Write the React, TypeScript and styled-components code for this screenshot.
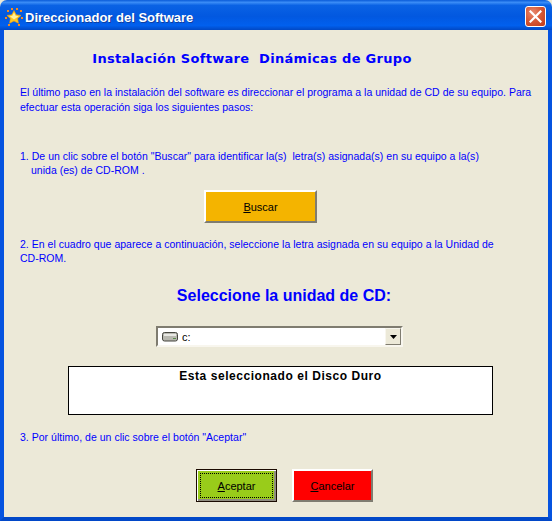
import React from "react";
import styled, { createGlobalStyle } from "styled-components";

const GlobalStyle = createGlobalStyle`
  html, body {
    margin: 0;
    padding: 0;
    background: #ece9d8;
  }
`;

const App = () => {
  return (
    <>
      <GlobalStyle />
      <Window>
        <TitleBar>
          <StarIcon />
          <TitleText>Direccionador del Software</TitleText>
          <CloseButton aria-label="Cerrar">
            <svg width="13" height="13" viewBox="0 0 13 13">
              <path d="M1.5 1.5 L11.5 11.5 M11.5 1.5 L1.5 11.5" stroke="#fff" strokeWidth="2.2" strokeLinecap="square" />
            </svg>
          </CloseButton>
        </TitleBar>
        <Body>
          <Heading>Instalación Software&nbsp; Dinámicas de Grupo</Heading>
          <Intro>
            El último paso en la instalación del software es direccionar el programa a la unidad de CD de su equipo. Para
            <br />
            efectuar esta operación siga los siguientes pasos:
          </Intro>
          <Step $top={34}>
            1. De un clic sobre el botón "Buscar" para identificar la(s)&nbsp; letra(s) asignada(s) en su equipo a la(s)
            <Indented>unida (es) de CD-ROM .</Indented>
          </Step>
          <Row $top={13} $left={184}>
            <ActionButton $bg="#f4b400" $width={113}>
              <u>B</u>uscar
            </ActionButton>
          </Row>
          <Step $top={14}>
            2. En el cuadro que aparece a continuación, seleccione la letra asignada en su equipo a la Unidad de
            <br />
            CD-ROM.
          </Step>
          <SelectLabel>Seleccione la unidad de CD:</SelectLabel>
          <Row $top={20} $left={136}>
            <Combo>
              <DriveIcon />
              <ComboValue>c:</ComboValue>
              <ComboArrow>
                <svg width="7" height="4" viewBox="0 0 7 4">
                  <path d="M0 0 H7 L3.5 4 Z" fill="#000" />
                </svg>
              </ComboArrow>
            </Combo>
          </Row>
          <StatusBox>Esta seleccionado el Disco Duro</StatusBox>
          <Step $top={15}>3. Por último, de un clic sobre el botón "Aceptar"</Step>
          <ButtonRow>
            <DefaultFrame>
              <ActionInner>
                <u>A</u>ceptar
              </ActionInner>
            </DefaultFrame>
            <ActionButton $bg="#ff0000" $width={81}>
              <u>C</u>ancelar
            </ActionButton>
          </ButtonRow>
        </Body>
      </Window>
    </>
  );
};

export default App;

const StarIcon = () => (
  <svg width="18" height="18" viewBox="0 0 18 18" style={{ flexShrink: 0 }}>
    <path d="M9 2.5 L11.2 6.8 L16 7.4 L12.6 10.6 L13.4 15.2 L9 13 L4.6 15.2 L5.4 10.6 L2 7.4 L6.8 6.8 Z" fill="#ffc81e" stroke="#f59a14" strokeWidth="0.6" />
    <path d="M9 4.5 L10.6 7.8 L13.6 8.2 L9 11.5 L4.8 8.2 L7.4 7.8 Z" fill="#fff0a0" />
    <g fill="#f58a1f">
      <rect x="2" y="2" width="2" height="2" />
      <rect x="6" y="0" width="2" height="2" />
      <rect x="11" y="0" width="2" height="2" />
      <rect x="15" y="2" width="2" height="2" />
      <rect x="0" y="9" width="2" height="2" />
      <rect x="16" y="9" width="2" height="2" />
      <rect x="3" y="16" width="2" height="2" />
      <rect x="13" y="16" width="2" height="2" />
    </g>
  </svg>
);

const DriveIcon = () => (
  <svg width="16" height="10" viewBox="0 0 16 10" style={{ flexShrink: 0 }}>
    <rect x="0.5" y="0.5" width="15" height="8.5" rx="2" fill="#b8b8b0" stroke="#45453f" />
    <rect x="2" y="2" width="12" height="2" fill="#e8e8e4" />
    <rect x="11" y="6" width="3" height="1" fill="#5a8a4a" />
  </svg>
);

const Window = styled.div`
  width: 552px;
  height: 521px;
  box-sizing: border-box;
  display: flex;
  flex-direction: column;
  overflow: hidden;
  background: #ece9d8;
  border-radius: 7px 7px 0 0;
`;

const TitleBar = styled.div`
  height: 30px;
  flex-shrink: 0;
  box-sizing: border-box;
  display: flex;
  align-items: center;
  padding: 4px 6px 0 5px;
  background: linear-gradient(
    180deg,
    #0a5bd8 0%,
    #3a8cf6 8%,
    #0a62e4 18%,
    #0258e0 55%,
    #0160ee 85%,
    #0148c4 100%
  );
`;

const TitleText = styled.span`
  margin-left: 2px;
  font-family: "Liberation Sans", Arial, sans-serif;
  font-size: 13px;
  font-weight: 700;
  color: #fff;
  text-shadow: 1px 1px 0 #0f3fa0;
`;

const CloseButton = styled.div`
  margin-left: auto;
  margin-top: -1px;
  width: 21px;
  height: 21px;
  box-sizing: border-box;
  display: flex;
  align-items: center;
  justify-content: center;
  border: 1px solid #fff;
  border-radius: 3px;
  background: radial-gradient(circle at 35% 30%, #e88a70 0%, #d85a38 45%, #c03a18 100%);
`;

const Body = styled.div`
  flex: 1;
  box-sizing: border-box;
  border-left: 4px solid #0553e0;
  border-right: 4px solid #0553e0;
  border-bottom: 4px solid #0148c8;
  padding: 0 16px;
  display: flex;
  flex-direction: column;
  font-family: "Liberation Sans", Arial, sans-serif;
`;

const Heading = styled.h1`
  margin: 21px 0 0;
  padding-right: 48px;
  text-align: center;
  font-family: "DejaVu Sans", sans-serif;
  font-size: 13px;
  line-height: 16px;
  font-weight: 700;
  letter-spacing: 0.3px;
  color: #0000ff;
`;

const Intro = styled.p`
  margin: 18px 0 0;
  font-size: 10.5px;
  line-height: 15px;
  letter-spacing: 0.02px;
  white-space: nowrap;
  color: #0000ff;
`;

const Step = styled.p<{ $top: number }>`
  margin: ${(p) => p.$top}px 0 0;
  font-size: 10.5px;
  line-height: 14px;
  letter-spacing: 0.02px;
  white-space: nowrap;
  color: #0000ff;
`;

const Indented = styled.span`
  display: block;
  padding-left: 11px;
`;

const Row = styled.div<{ $top: number; $left: number }>`
  margin-top: ${(p) => p.$top}px;
  padding-left: ${(p) => p.$left}px;
  display: flex;
`;

const ActionButton = styled.div<{ $bg: string; $width: number }>`
  width: ${(p) => p.$width}px;
  height: 33px;
  box-sizing: border-box;
  display: flex;
  align-items: center;
  justify-content: center;
  background: ${(p) => p.$bg};
  border: 2px solid;
  border-color: #fff #7f7c70 #7f7c70 #fff;
  font-size: 11px;
  color: #000;
  white-space: pre;
`;

const SelectLabel = styled.div`
  margin-top: 21px;
  padding-left: 16px;
  text-align: center;
  font-size: 16px;
  line-height: 20px;
  font-weight: 700;
  color: #0000ff;
`;

const Combo = styled.div`
  width: 247px;
  height: 21px;
  box-sizing: border-box;
  display: flex;
  align-items: center;
  background: #fff;
  border: 2px solid;
  border-color: #7f7c70 #f8f6ee #f8f6ee #7f7c70;
  padding-left: 4px;
`;

const ComboValue = styled.span`
  margin-left: 4px;
  font-size: 11px;
  color: #000;
`;

const ComboArrow = styled.div`
  margin-left: auto;
  width: 16px;
  height: 17px;
  box-sizing: border-box;
  display: flex;
  align-items: center;
  justify-content: center;
  background: #ece9d8;
  border: 1px solid;
  border-color: #f8f6ee #7f7c70 #7f7c70 #f8f6ee;
`;

const StatusBox = styled.div`
  margin: 19px 0 0 48px;
  width: 425px;
  height: 49px;
  box-sizing: border-box;
  background: #fff;
  border: 1px solid #000;
  padding-top: 2px;
  text-align: center;
  font-size: 12px;
  line-height: 14px;
  font-weight: 700;
  letter-spacing: 0.55px;
  color: #000;
`;

const ButtonRow = styled.div`
  margin-top: 25px;
  padding-left: 176px;
  display: flex;
  gap: 15px;
`;

const DefaultFrame = styled.div`
  width: 81px;
  height: 33px;
  box-sizing: border-box;
  border: 1px solid #1a0a00;
  background: #99cc1a;
  box-shadow: inset 1px 1px 0 #fff, inset -2px -2px 0 #8f8c80;
  padding: 3px;
  display: flex;
`;

const ActionInner = styled.div`
  flex: 1;
  display: flex;
  align-items: center;
  justify-content: center;
  border: 1px dotted #000;
  font-size: 11px;
  color: #000;
  white-space: pre;
`;
